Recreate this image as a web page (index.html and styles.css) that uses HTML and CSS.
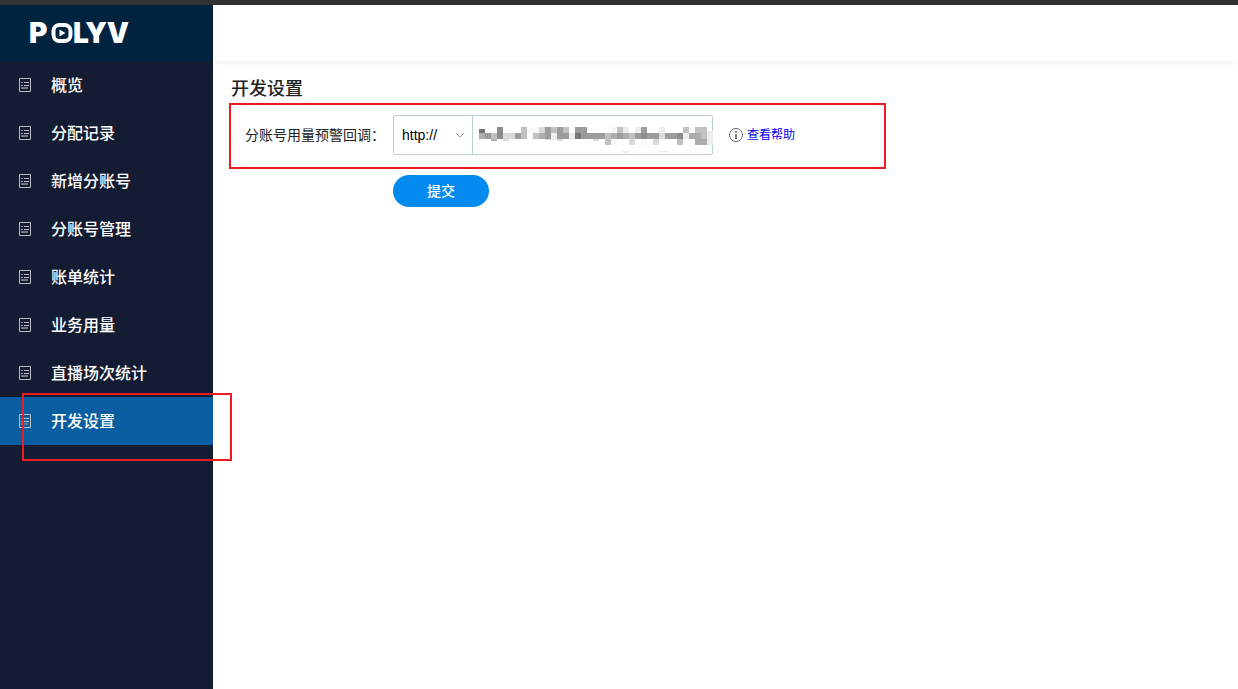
FILE: index.html
```html
<!DOCTYPE html>
<html lang="zh-CN">
<head>
<meta charset="utf-8">
<title>开发设置</title>
<link rel="stylesheet" href="styles.css">
</head>
<body>
<svg class="defs" aria-hidden="true">
  <symbol id="list" viewBox="0 0 12 14">
    <path d="M.5.5h11v13H.5z" fill="none" stroke="#b9bdc4"/>
    <path d="M5 4.5h5M5 7.5h5" stroke="#c4c8ce"/>
    <path d="M2 4.5h2M2 7.5h2" stroke="#9299a5"/>
    <path d="M2 10h7" stroke="#727a88" stroke-width="2"/>
  </symbol>
</svg>
<div class="topbar"></div>
<div class="layout">
  <aside class="sidebar">
    <div class="brand">
      <svg class="logo" width="100" height="24" viewBox="0 0 100 24" role="img" aria-label="POLYV">
        <text class="logo-text" x="-1" y="22">P</text>
        <rect x="23.5" y="4" width="17" height="16" rx="6" fill="none" stroke="#fff" stroke-width="4"/>
        <path class="logo-play" d="M29.5 8.5v7l6-3.500z"/>
        <text class="logo-text" x="43" y="22">LYV</text>
      </svg>
    </div>
    <nav class="menu">
      <a class="item" href="#"><svg class="icon"><use href="#list"/></svg>概览</a>
      <a class="item" href="#"><svg class="icon"><use href="#list"/></svg>分配记录</a>
      <a class="item" href="#"><svg class="icon"><use href="#list"/></svg>新增分账号</a>
      <a class="item" href="#"><svg class="icon"><use href="#list"/></svg>分账号管理</a>
      <a class="item" href="#"><svg class="icon"><use href="#list"/></svg>账单统计</a>
      <a class="item" href="#"><svg class="icon"><use href="#list"/></svg>业务用量</a>
      <a class="item" href="#"><svg class="icon"><use href="#list"/></svg>直播场次统计</a>
      <a class="item active" href="#"><svg class="icon"><use href="#list"/></svg>开发设置<span class="mark mark-item"></span></a>
    </nav>
  </aside>
  <div class="page">
    <header class="header"></header>
    <main class="content">
      <h1 class="title">开发设置</h1>
      <form class="form">
        <div class="row">
          <label class="label" for="callback">分账号用量预警回调：</label>
          <div class="group">
            <div class="protocol">
              <select class="select" aria-label="协议"><option>http://</option><option>https://</option></select>
              <svg class="chevron" width="10" height="6" viewBox="0 0 10 6"><path d="M1 1l4 4 4-4" fill="none" stroke="#999"/></svg>
            </div>
            <div class="address">
              <input class="input" id="callback" type="text">
              <svg class="mosaic" width="234" height="27" viewBox="0 0 234 27" shape-rendering="crispEdges" aria-hidden="true">
                <path fill="#777" d="M0 2h6v4H0zM96 6h6v6h-6z"/>
                <path fill="#8c8c8c" d="M18 0h6v12h-6zM162 6h6v6h-6zM198 6h6v6h-6z"/>
                <path fill="#9c9c9c" d="M6 6h6v6H6zM36 6h6v6h-6zM66 0h6v12h-6zM78 0h6v12h-6zM84 6h6v6h-6zM96 0h12v6H96zM102 6h24v6h-24zM138 6h6v6h-6zM156 6h6v6h-6zM162 0h6v6h-6zM168 6h12v6h-12zM186 6h12v6h-12z"/>
                <path fill="#adadad" d="M0 6h6v6H0zM60 6h6v6h-6zM132 6h6v6h-6zM144 6h6v6h-6zM210 6h12v6h-12zM216 12h12v6h-12zM12 12h6v2h-6z"/>
                <path fill="#c1c1c1" d="M12 6h6v6h-6zM42 0h6v12h-6zM54 6h6v6h-6zM72 0h6v6h-6zM84 0h6v6h-6zM126 6h6v12h-6zM138 0h6v6h-6zM150 6h6v6h-6zM198 12h6v6h-6zM204 0h6v6h-6zM216 0h6v6h-6zM222 0h6v12h-6z"/>
                <path fill="#dadada" d="M24 6h12v6H24zM24 12h6v2h-6zM60 0h6v6h-6zM66 12h6v1h-6zM78 12h6v2h-6zM114 12h6v2h-6zM150 12h6v6h-6zM174 12h6v6h-6zM180 6h6v6h-6z"/>
                <path fill="#ededed" d="M72 6h6v7h-6zM90 6h6v6h-6zM144 0h6v6h-6zM156 0h6v6h-6zM180 0h6v6h-6zM204 6h6v6h-6zM228 4h6v14h-6zM142 24h8v2h-4zM180 24h10v1h-10z"/>
                <path fill="#f8f8f8" d="M48 0h6v6h-6zM54 0h6v6h-6zM132 0h6v6h-6zM132 12h6v6h-6zM162 12h6v6h-6z"/>
              </svg>
            </div>
          </div>
          <a class="help" href="#">
            <svg width="14" height="14" viewBox="0 0 14 14"><circle cx="7" cy="7" r="6.5" fill="none" stroke="#666"/><path d="M7 3v2M7 6v5" stroke="#555" stroke-width="1.5"/></svg>
            查看帮助
          </a>
          <span class="mark mark-row"></span>
        </div>
        <button class="submit" type="submit">提交</button>
      </form>
    </main>
  </div>
</div>
</body>
</html>
```
FILE: styles.css
```css
* {
  box-sizing: border-box;
}

body {
  margin: 0;
  min-height: 100vh;
  display: flex;
  flex-direction: column;
  background: #fff;
  color: #222;
  font: 14px/20px "Liberation Sans", "Noto Sans CJK SC", sans-serif;
}

.defs {
  position: absolute;
  width: 0;
  height: 0;
}

.topbar {
  height: 5px;
  background: #333;
}

.layout {
  flex: 1;
  display: flex;
}

.sidebar {
  flex: none;
  width: 213px;
  background: #131c33;
}

.brand {
  display: flex;
  align-items: center;
  height: 56px;
  padding-left: 30px;
  background: #00233f;
}

.logo {
  overflow: visible;
}

.logo-text {
  fill: #fff;
  font: 900 28px "Inter", "Open Sans", sans-serif;
}

.logo-play {
  fill: #fff;
}

.item {
  position: relative;
  display: flex;
  align-items: center;
  gap: 20px;
  height: 48px;
  padding-left: 19px;
  color: #fff;
  font-size: 16px;
  line-height: 21px;
  font-weight: 500;
  text-decoration: none;
}

.active {
  background: #085ea1;
}

.icon {
  width: 12px;
  height: 14px;
}

.mark {
  position: absolute;
  z-index: 1;
  border: 2px solid #ed1c24;
  pointer-events: none;
}

.mark-item {
  inset: -4px -19px -16px 22px;
}

.page {
  flex: 1;
  min-width: 0;
}

.header {
  height: 56px;
  background: #fff;
  box-shadow: 0 1px 6px rgba(0, 0, 0, 0.08);
}

.content {
  padding: 16px;
}

.title {
  margin: 0;
  padding-left: 2px;
  font-size: 18px;
  line-height: 24px;
  font-weight: 500;
}

.row {
  position: relative;
  display: flex;
  align-items: center;
  width: fit-content;
  padding: 14px 91px 14px 16px;
}

.mark-row {
  inset: 2px 0 0;
}

.label {
  width: 148px;
  white-space: nowrap;
}

.group {
  display: flex;
  width: 320px;
  height: 40px;
  border: 1px solid #c0cdd2;
  border-radius: 2px;
}

.protocol {
  position: relative;
  width: 79px;
}

.select,
.input {
  width: 100%;
  height: 100%;
  margin: 0;
  padding: 0 8px;
  border: 0;
  background: transparent;
  color: #000;
  font: inherit;
}

.select {
  appearance: none;
  border-right: 1px solid #c0cdd2;
}

.chevron {
  position: absolute;
  top: 16px;
  right: 8px;
  pointer-events: none;
}

.address {
  position: relative;
  flex: 1;
}

.mosaic {
  position: absolute;
  top: 11px;
  left: 6px;
  pointer-events: none;
}

.help {
  display: flex;
  align-items: center;
  gap: 4px;
  margin-left: 16px;
  color: #0000ee;
  font-size: 12px;
  text-decoration: none;
}

.submit {
  display: block;
  width: 96px;
  height: 32px;
  margin: 6px 0 0 164px;
  padding: 0;
  border: 0;
  border-radius: 16px;
  background: #038bf0;
  color: #fff;
  font: inherit;
  font-weight: 500;
}
```
